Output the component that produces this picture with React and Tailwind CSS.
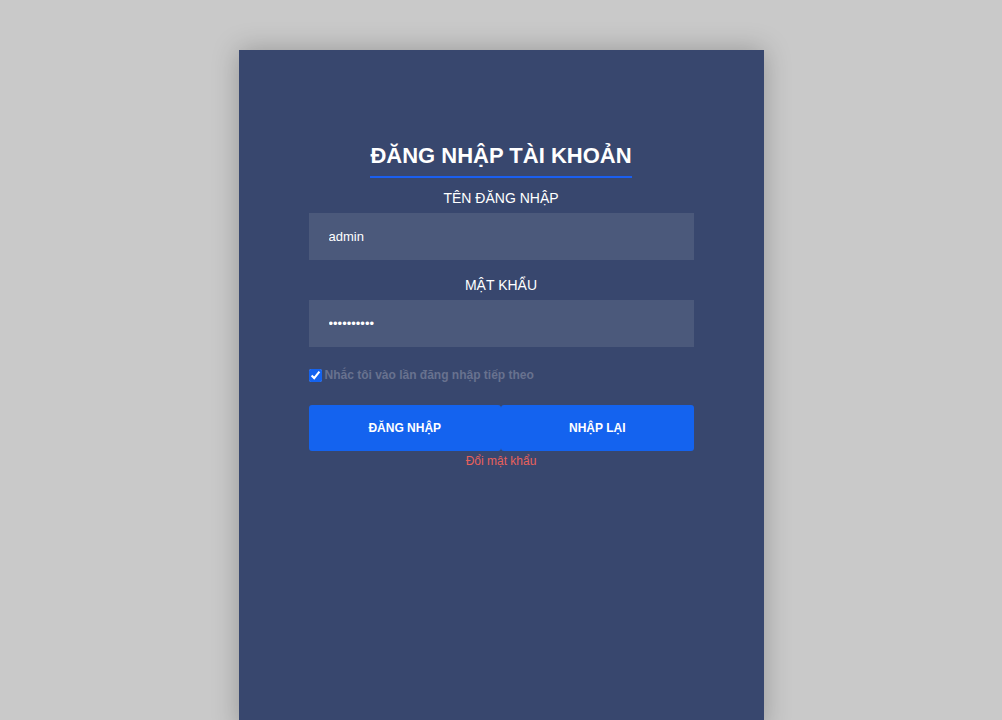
export default function App() {
  return (
    <div className="min-h-[720px] bg-[#c9c9c9] pt-[50px] overflow-hidden" style={{ fontFamily: '"Liberation Sans", Arial, sans-serif' }}>
      <div className="mx-auto w-[525px] h-[680px] bg-[#38476e] shadow-[0_0_25px_rgba(0,0,0,0.25)] px-[70px] pt-[93px]">
        <div className="text-center">
          <h1 className="inline-block text-[22px] leading-[26px] font-bold text-white border-b-2 border-[#1a5ff0] pb-[7px]">ĐĂNG NHẬP TÀI KHOẢN</h1>
        </div>
        <div className="mt-[10px] text-center text-[14px] leading-[20px] text-white">TÊN ĐĂNG NHẬP</div>
        <input
          className="mt-[5px] block w-full h-[47px] bg-[#4b597b] text-white text-[13px] px-[20px] outline-none"
          defaultValue="admin"
        />
        <div className="mt-[15px] text-center text-[14px] leading-[20px] text-white">MẬT KHẨU</div>
        <input
          type="password"
          className="mt-[5px] block w-full h-[47px] bg-[#4b597b] text-white text-[13px] px-[20px] outline-none"
          defaultValue="1234567890"
        />
        <label className="mt-[19px] flex items-center gap-[3px] text-[12px] font-bold text-[#68728f]">
          <input type="checkbox" defaultChecked className="w-[13px] h-[13px] m-0 accent-[#1463ef]" />
          <span>Nhắc tôi vào lần đăng nhập tiếp theo</span>
        </label>
        <div className="mt-[21px] flex">
          <button className="flex-1 h-[46px] bg-[#1463ef] rounded-[3px] text-white text-[12px] font-bold">ĐĂNG NHẬP</button>
          <button className="flex-1 h-[46px] bg-[#1463ef] rounded-[3px] text-white text-[12px] font-bold">NHẬP LẠI</button>
        </div>
        <div className="text-center mt-[2px] text-[12px] leading-[16px] text-[#e8615b]">Đổi mật khẩu</div>
      </div>
    </div>
  );
}
